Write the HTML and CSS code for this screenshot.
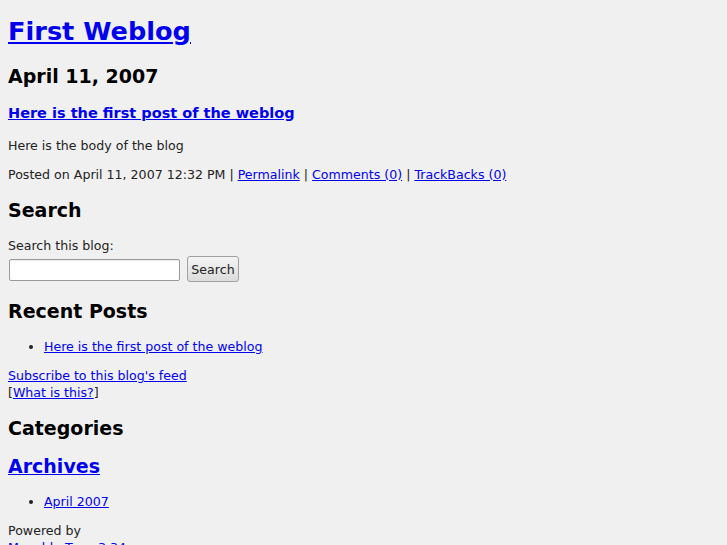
FILE: index.html
```html
<!DOCTYPE html>
<html>
<head>
<meta charset="utf-8">
<title>First Weblog</title>
<link rel="stylesheet" href="styles.css">
</head>
<body>
<div class="container">
  <div class="banner">
    <h1 class="blog-title"><a href="#">First Weblog</a></h1>
  </div>
  <div class="content">
    <h2 class="date-header">April 11, 2007</h2>
    <div class="entry">
      <h3 class="entry-header"><a href="#">Here is the first post of the weblog</a></h3>
      <div class="entry-body"><p>Here is the body of the blog</p></div>
      <p class="entry-footer">Posted on April 11, 2007 12:32 PM | <a href="#">Permalink</a> | <a href="#">Comments (0)</a> | <a href="#">TrackBacks (0)</a></p>
    </div>
  </div>
  <div class="sidebar">
    <h2 class="module-header">Search</h2>
    <form class="search-form">
      <label class="search-label" for="search">Search this blog:</label>
      <div class="search-row">
        <input class="search-input" id="search" type="text">
        <button class="search-button" type="button">Search</button>
      </div>
    </form>
    <h2 class="module-header">Recent Posts</h2>
    <ul class="module-list">
      <li><a href="#">Here is the first post of the weblog</a></li>
    </ul>
    <div class="feed">
      <a href="#">Subscribe to this blog's feed</a><br>
      [<a href="#">What is this?</a>]
    </div>
    <h2 class="module-header">Categories</h2>
    <h2 class="module-header"><a href="#">Archives</a></h2>
    <ul class="module-list">
      <li><a href="#">April 2007</a></li>
    </ul>
    <div class="powered">Powered by<br><a href="#">Movable Type 3.34</a></div>
  </div>
</div>
</body>
</html>
```
FILE: styles.css
```css
html {
  background: #f0f0f0;
}
body {
  margin: 8px;
  font-family: "DejaVu Sans", Verdana, sans-serif;
  font-size: 12.6px;
  line-height: 17px;
  color: #222;
  background: #f0f0f0;
}
a {
  color: #0000ee;
}
h1, h2, h3 {
  color: #000;
  font-weight: bold;
}
.blog-title {
  font-size: 25.6px;
  line-height: 30px;
  margin: 8px 0 19px;
}
.date-header, .module-header {
  font-size: 19px;
  line-height: 22px;
  margin: 16px 0;
}
.entry-header {
  font-size: 14.5px;
  line-height: 17px;
  margin: 17.5px 0 15px;
}
p {
  margin: 12px 0;
}
.search-form {
  margin: 0;
}
.search-label {
  display: block;
}
.search-row {
  display: flex;
  align-items: flex-end;
  margin: 2.5px 0 18px;
}
.search-input {
  box-sizing: border-box;
  width: 171px;
  height: 22px;
  margin: 0 0 1px 1px;
  padding: 1px 3px;
  border: 1px solid #9a9a9a;
  border-radius: 2px;
  background: #fff;
  box-shadow: inset 0 1px 1px rgba(0, 0, 0, 0.08);
}
.search-button {
  box-sizing: border-box;
  margin-left: 7px;
  height: 26px;
  width: 52px;
  padding: 0;
  font-family: "DejaVu Sans", sans-serif;
  font-size: 12.6px;
  color: #222;
  border: 1px solid #a0a0a0;
  border-radius: 3px;
  background: linear-gradient(#f4f4f4, #dcdcdc);
}
.module-list {
  margin: 12px 0;
  padding-left: 36px;
}
.powered {
  margin-top: 12px;
}
```
